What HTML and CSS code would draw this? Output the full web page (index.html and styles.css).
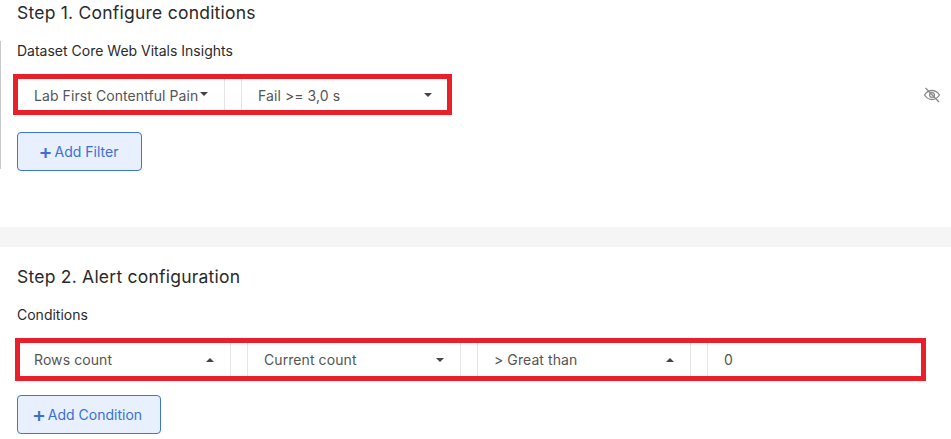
FILE: index.html
```html
<!DOCTYPE html>
<html lang="en">
<head>
    <meta charset="UTF-8">
    <meta name="viewport" content="width=device-width, initial-scale=1.0">
    <title>Alert</title>
    <link rel="stylesheet" href="styles.css">
</head>
<body>

    <section class="step step-one">
        <h2>Step 1. Configure conditions</h2>
        <div class="filter-block">
            <p class="label">Dataset Core Web Vitals Insights</p>
            <div class="row-line">
                <div class="query-row query-filter">
                    <div class="cell cell-metric">
                        <span>Lab First Contentful Pain</span>
                        <i class="caret caret-near"></i>
                    </div>
                    <div class="spacer"></div>
                    <div class="cell cell-fail">
                        <span>Fail &gt;= 3,0 s</span>
                        <i class="caret"></i>
                    </div>
                </div>
                <svg class="eye-off" width="20" height="20" viewBox="0 0 20 20" fill="none" stroke="#8a8a8a" stroke-width="1.3">
                    <path d="M2.500 10c2-3 4.600-4.500 7.500-4.500s5.500 1.500 7.500 4.500c-2 3-4.600 4.500-7.500 4.500S4.500 13 2.500 10z"/>
                    <circle cx="10" cy="10" r="2.400"/>
                    <path d="M3.500 3l13.500 14"/>
                </svg>
            </div>
            <button class="add-btn add-filter"><b>+</b> Add Filter</button>
        </div>
    </section>

    <div class="band"></div>

    <section class="step step-two">
        <h2>Step 2. Alert configuration</h2>
        <p class="label">Conditions</p>
        <div class="query-row query-alert">
            <div class="cell cell-rows">
                <span>Rows count</span>
                <i class="caret caret-up"></i>
            </div>
            <div class="spacer"></div>
            <div class="cell cell-current">
                <span>Current count</span>
                <i class="caret"></i>
            </div>
            <div class="spacer"></div>
            <div class="cell cell-great">
                <span>&gt; Great than</span>
                <i class="caret caret-up"></i>
            </div>
            <div class="spacer"></div>
            <div class="cell cell-value">
                <span>0</span>
            </div>
        </div>
        <button class="add-btn add-condition"><b>+</b> Add Condition</button>
    </section>

</body>
</html>
```

FILE: styles.css
```css
/* General Styles */
body {
    font-family: Inter, 'Liberation Sans', sans-serif;
    background-color: #ffffff;
    color: #2a2a2a;
    margin: 0;
    overflow: hidden;
}

h2 {
    font-size: 17.5px;
    font-weight: 400;
    line-height: 24px;
    margin: 0;
    letter-spacing: 0.23px;
    padding-top: 1px;
}

.label {
    font-size: 14px;
    line-height: 20px;
    margin: 0;
}

/* Steps */
.step {
    padding-left: 17px;
}

.step-one {
    height: 227px;
}

.step-two {
    padding-top: 17px;
}

.filter-block {
    margin-top: 17px;
    height: 128px;
    border-left: 1px solid #c9c9c9;
    margin-left: -17px;
    padding-left: 16px;
}

.band {
    height: 20px;
    background: #f5f5f5;
}

.filter-block .label {
    margin-top: -1px;
}

.step-two .label {
    margin-top: 16px;
}

/* Query row */
.row-line {
    display: flex;
    align-items: center;
    justify-content: space-between;
    margin-top: 13px;
    margin-left: -4px;
    padding-right: 9px;
}

.query-row {
    display: flex;
    height: 31px;
    border: 5px solid #e9202a;
    font-size: 14px;
    letter-spacing: 0.08px;
    color: #555;
    box-sizing: content-box;
}

.query-filter {
    width: 429px;
}

.query-alert {
    width: 901px;
    height: 33px;
    margin-top: 13px;
    margin-left: -2px;
}

.cell {
    display: flex;
    align-items: center;
    justify-content: space-between;
    box-sizing: border-box;
    padding-left: 16px;
    border-right: 1px solid #e4e4e4;
}

.spacer {
    width: 16px;
    border-right: 1px solid #e4e4e4;
}

.query-filter .cell span {
    padding-top: 2px;
}

.cell-metric { width: 207px; justify-content: flex-start; }
.cell-fail { flex: 1; border-right: 0; padding-right: 15px; }

.cell-rows { width: 211px; padding-left: 14px; padding-right: 16px; }
.cell-current { width: 213px; padding-right: 16px; }
.cell-great { width: 213px; padding-right: 16px; }
.cell-value { flex: 1; border-right: 0; }

.caret {
    width: 0;
    height: 0;
    border-left: 4px solid transparent;
    border-right: 4px solid transparent;
    border-top: 4px solid #444;
}

.caret-near {
    margin-left: 2px;
    margin-top: -2px;
}

.caret-up {
    border-top: 0;
    border-bottom: 4px solid #444;
}

/* Buttons */
.add-btn {
    display: block;
    height: 39px;
    font-family: inherit;
    font-size: 14px;
    color: #3b6fd8;
    background: #e8f0fd;
    border: 1px solid #3b76d6;
    border-radius: 4px;
    padding: 0 2px 0 0;
}

.add-btn b {
    font-weight: 500;
    font-size: 21px;
    line-height: 14px;
    vertical-align: -2px;
    margin-right: -2px;
}

.add-filter {
    width: 125px;
    margin-top: 17px;
}

.add-condition {
    width: 144px;
    margin-top: 14px;
    padding-right: 4px;
}

.eye-off {
    flex: none;
}
```
